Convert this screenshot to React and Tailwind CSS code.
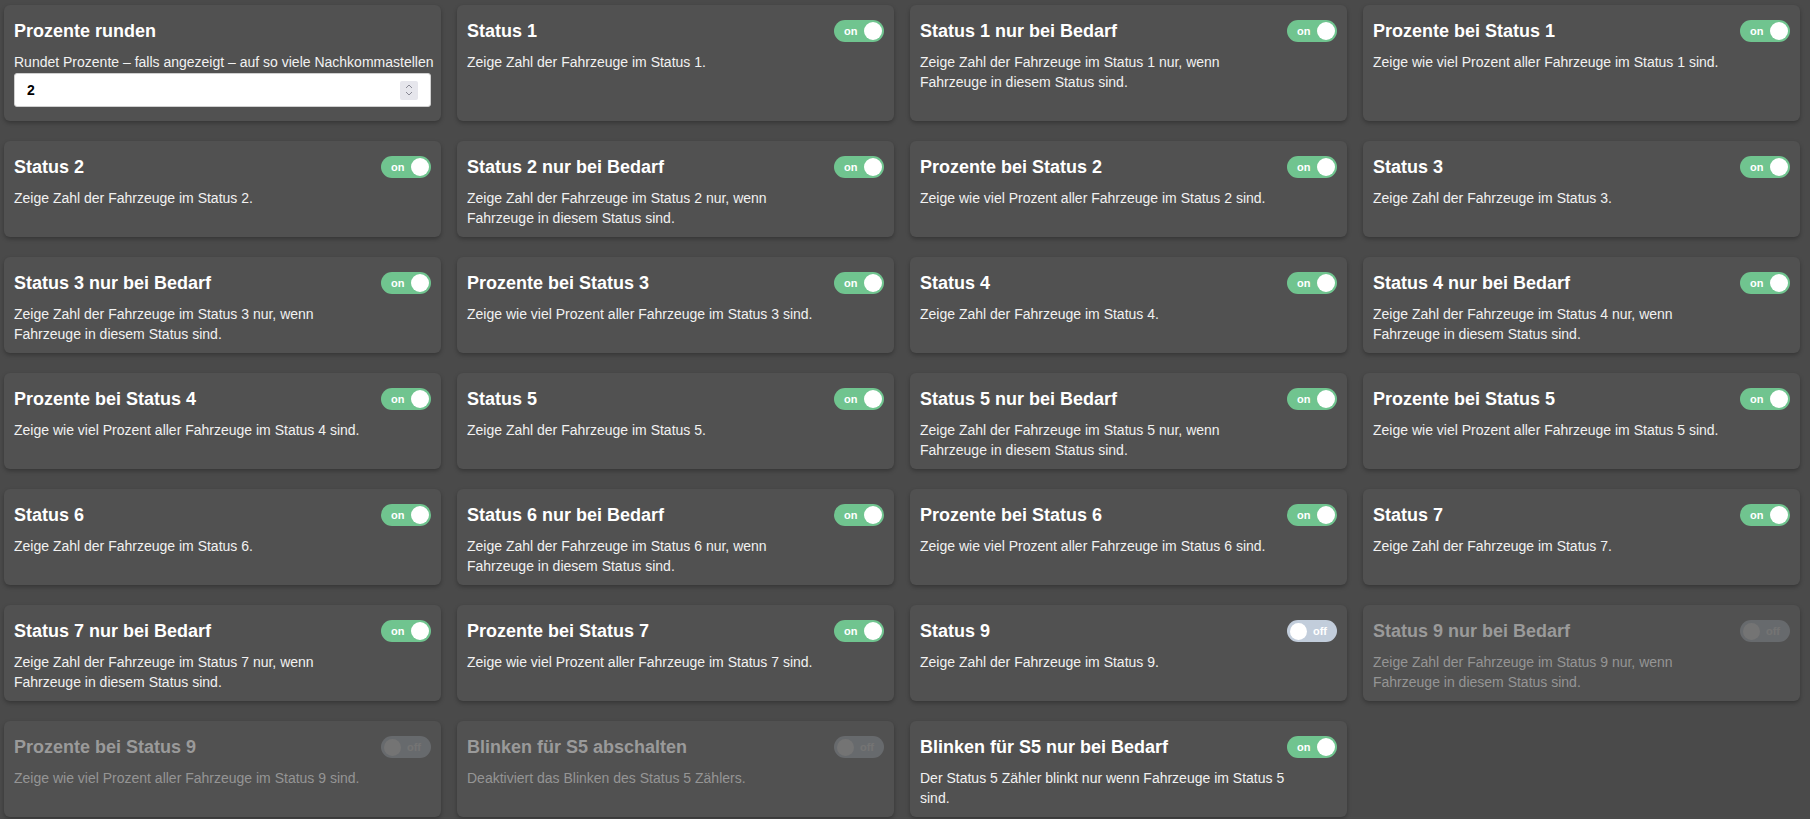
const cards = [
  { type: "input" },
  { title: "Status 1", desc: "Zeige Zahl der Fahrzeuge im Status 1.", on: true },
  { title: "Status 1 nur bei Bedarf", desc: "Zeige Zahl der Fahrzeuge im Status 1 nur, wenn Fahrzeuge in diesem Status sind.", on: true },
  { title: "Prozente bei Status 1", desc: "Zeige wie viel Prozent aller Fahrzeuge im Status 1 sind.", on: true },
  { title: "Status 2", desc: "Zeige Zahl der Fahrzeuge im Status 2.", on: true },
  { title: "Status 2 nur bei Bedarf", desc: "Zeige Zahl der Fahrzeuge im Status 2 nur, wenn Fahrzeuge in diesem Status sind.", on: true },
  { title: "Prozente bei Status 2", desc: "Zeige wie viel Prozent aller Fahrzeuge im Status 2 sind.", on: true },
  { title: "Status 3", desc: "Zeige Zahl der Fahrzeuge im Status 3.", on: true },
  { title: "Status 3 nur bei Bedarf", desc: "Zeige Zahl der Fahrzeuge im Status 3 nur, wenn Fahrzeuge in diesem Status sind.", on: true },
  { title: "Prozente bei Status 3", desc: "Zeige wie viel Prozent aller Fahrzeuge im Status 3 sind.", on: true },
  { title: "Status 4", desc: "Zeige Zahl der Fahrzeuge im Status 4.", on: true },
  { title: "Status 4 nur bei Bedarf", desc: "Zeige Zahl der Fahrzeuge im Status 4 nur, wenn Fahrzeuge in diesem Status sind.", on: true },
  { title: "Prozente bei Status 4", desc: "Zeige wie viel Prozent aller Fahrzeuge im Status 4 sind.", on: true },
  { title: "Status 5", desc: "Zeige Zahl der Fahrzeuge im Status 5.", on: true },
  { title: "Status 5 nur bei Bedarf", desc: "Zeige Zahl der Fahrzeuge im Status 5 nur, wenn Fahrzeuge in diesem Status sind.", on: true },
  { title: "Prozente bei Status 5", desc: "Zeige wie viel Prozent aller Fahrzeuge im Status 5 sind.", on: true },
  { title: "Status 6", desc: "Zeige Zahl der Fahrzeuge im Status 6.", on: true },
  { title: "Status 6 nur bei Bedarf", desc: "Zeige Zahl der Fahrzeuge im Status 6 nur, wenn Fahrzeuge in diesem Status sind.", on: true },
  { title: "Prozente bei Status 6", desc: "Zeige wie viel Prozent aller Fahrzeuge im Status 6 sind.", on: true },
  { title: "Status 7", desc: "Zeige Zahl der Fahrzeuge im Status 7.", on: true },
  { title: "Status 7 nur bei Bedarf", desc: "Zeige Zahl der Fahrzeuge im Status 7 nur, wenn Fahrzeuge in diesem Status sind.", on: true },
  { title: "Prozente bei Status 7", desc: "Zeige wie viel Prozent aller Fahrzeuge im Status 7 sind.", on: true },
  { title: "Status 9", desc: "Zeige Zahl der Fahrzeuge im Status 9.", on: false },
  { title: "Status 9 nur bei Bedarf", desc: "Zeige Zahl der Fahrzeuge im Status 9 nur, wenn Fahrzeuge in diesem Status sind.", on: false, disabled: true },
  { title: "Prozente bei Status 9", desc: "Zeige wie viel Prozent aller Fahrzeuge im Status 9 sind.", on: false, disabled: true },
  { title: "Blinken für S5 abschalten", desc: "Deaktiviert das Blinken des Status 5 Zählers.", on: false, disabled: true },
  { title: "Blinken für S5 nur bei Bedarf", desc: "Der Status 5 Zähler blinkt nur wenn Fahrzeuge im Status 5 sind.", on: true },
];

function Toggle({ on, disabled }) {
  if (on) {
    return (
      <div className="flex items-center justify-between w-[50px] h-[22px] shrink-0 rounded-full bg-[#70c48f] pl-[10px] pr-[2px]">
        <span className="text-[11px] font-bold leading-none text-white">on</span>
        <span className="w-[18px] h-[18px] rounded-full bg-white" />
      </div>
    );
  }
  return (
    <div
      className={
        "flex items-center justify-between w-[50px] h-[22px] shrink-0 rounded-full pl-[3px] pr-[10px] " +
        (disabled ? "bg-[#c2cddb] opacity-20" : "bg-[#c2cddb]")
      }
    >
      <span className="w-[17px] h-[17px] rounded-full bg-white" />
      <span className="text-[11px] font-bold leading-none text-white">off</span>
    </div>
  );
}

function Card({ card }) {
  const dim = card.disabled;
  return (
    <div className="rounded-[6px] bg-[#515151] shadow-[0_2px_4px_rgba(0,0,0,0.28)] pt-[14px] px-[10px] pb-[9px]">
      <div className="flex items-center justify-between h-[24px]">
        <h2 className={"text-[18px] font-bold leading-[24px] " + (dim ? "text-[#9a9a9a]" : "text-white")}>
          {card.title}
        </h2>
        <Toggle on={card.on} disabled={dim} />
      </div>
      <p className={"mt-[9px] max-w-[366px] text-[14px] leading-[20px] " + (dim ? "text-[#959595]" : "text-[#f2f2f2]")}>
        {card.desc}
      </p>
    </div>
  );
}

function InputCard() {
  return (
    <div className="rounded-[6px] bg-[#515151] shadow-[0_2px_4px_rgba(0,0,0,0.28)] pt-[14px] px-[10px] pb-[9px]">
      <h2 className="text-[18px] font-bold leading-[24px] text-white">Prozente runden</h2>
      <p className="mt-[9px] text-[14px] leading-[20px] text-[#f2f2f2] whitespace-nowrap">
        Rundet Prozente – falls angezeigt – auf so viele Nachkommastellen
      </p>
      <div className="mt-[1px] mb-[5px] flex items-center justify-between h-[34px] rounded-[3px] border border-[#cfcfcf] bg-white pl-[12px] pr-[12px]">
        <span className="text-[14px] font-bold text-black">2</span>
        <div className="flex flex-col items-center justify-center w-[18px] h-[19px] bg-[#e6e6ec] rounded-[2px]">
          <svg width="8" height="5" viewBox="0 0 8 5" className="mb-[2px]">
            <path d="M1 4 L4 1 L7 4" fill="none" stroke="#8a8a95" strokeWidth="1" />
          </svg>
          <svg width="8" height="5" viewBox="0 0 8 5">
            <path d="M1 1 L4 4 L7 1" fill="none" stroke="#8a8a95" strokeWidth="1" />
          </svg>
        </div>
      </div>
    </div>
  );
}

export default function App() {
  return (
    <div
      className="min-h-screen bg-[#4a4a4a] pt-[5px] pl-[4px] pr-[10px]"
      style={{ fontFamily: '"Liberation Sans", Arial, sans-serif' }}
    >
      <div className="grid grid-cols-4 gap-x-[16px] gap-y-[20px]">
        {cards.map((c, i) =>
          c.type === "input" ? <InputCard key={i} /> : <Card key={i} card={c} />
        )}
      </div>
    </div>
  );
}
